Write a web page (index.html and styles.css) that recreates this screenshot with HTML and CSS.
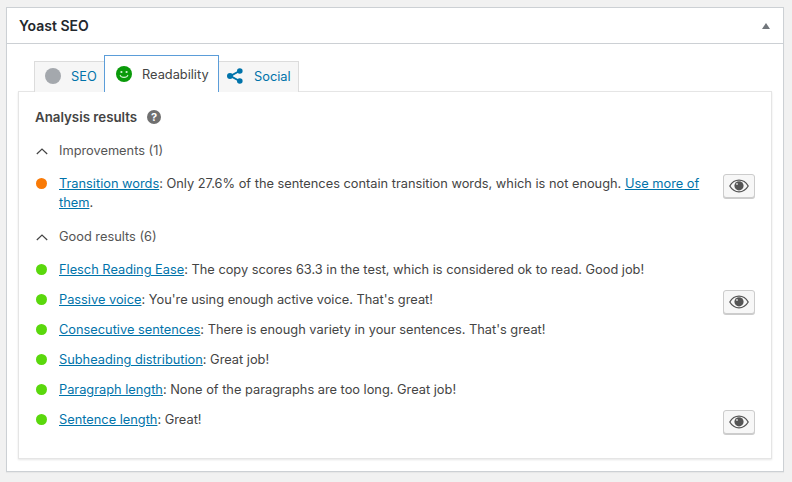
FILE: index.html
```html
<!DOCTYPE html>
<html lang="en">
<head>
<meta charset="utf-8">
<title>Yoast SEO</title>
<link rel="stylesheet" href="styles.css">
</head>
<body>
<section class="postbox">
  <header class="postbox-head">
    <h2 class="postbox-title">Yoast SEO</h2>
    <span class="collapse-arrow"></span>
  </header>
  <div class="postbox-body">
    <nav class="tabs">
      <a class="tab tab-seo"><span class="dot-gray"></span><span>SEO</span></a>
      <a class="tab tab-active">
        <svg class="smile" viewBox="0 0 16 16" width="16" height="16"><circle cx="8" cy="8" r="8" fill="#0a9a0a"/><circle cx="5.4" cy="6" r="1.1" fill="#d5f2d5"/><circle cx="10.6" cy="6" r="1.1" fill="#d5f2d5"/><path d="M4.2 9.4c.9 2.6 6.7 2.6 7.6 0" fill="none" stroke="#d5f2d5" stroke-width="1.1" stroke-linecap="round"/></svg>
        <span>Readability</span>
      </a>
      <a class="tab tab-social">
        <svg viewBox="0 0 16 16" width="16" height="16"><path d="M12.5 3 3.5 8l9 5" fill="none" stroke="#0073aa" stroke-width="2"/><circle cx="12.8" cy="3" r="2.8" fill="#0073aa"/><circle cx="3" cy="8" r="3" fill="#0073aa"/><circle cx="12.8" cy="13" r="2.8" fill="#0073aa"/></svg>
        <span>Social</span>
      </a>
    </nav>
    <div class="card">
      <h3 class="card-title">Analysis results <span class="help">?</span></h3>

      <h4 class="group-title"><svg class="chev" viewBox="0 0 12 7" width="12" height="7"><path d="M.8 6 6 1l5.2 5" fill="none" stroke="#444" stroke-width="1.2"/></svg>Improvements (1)</h4>
      <ul class="results results-first">
        <li class="result">
          <span class="bullet orange"></span>
          <p class="result-text"><a>Transition words</a>: Only 27.6% of the sentences contain transition words, which is not enough. <a>Use more of them</a>.</p>
          <button class="eye-btn"><svg viewBox="0 0 20 14" width="20" height="14"><path d="M.8 7C3 3.2 6.2 1.2 10 1.2S17 3.2 19.2 7C17 10.8 13.8 12.8 10 12.8S3 10.8.8 7Z" fill="none" stroke="#555" stroke-width="1.3"/><circle cx="10" cy="6.8" r="4.6" fill="#555"/><circle cx="8" cy="4.9" r="1" fill="#ccc"/></svg></button>
        </li>
      </ul>

      <h4 class="group-title group-good"><svg class="chev" viewBox="0 0 12 7" width="12" height="7"><path d="M.8 6 6 1l5.2 5" fill="none" stroke="#444" stroke-width="1.2"/></svg>Good results (6)</h4>
      <ul class="results results-good">
        <li class="result">
          <span class="bullet green"></span>
          <p class="result-text"><a>Flesch Reading Ease</a>: The copy scores 63.3 in the test, which is considered ok to read. Good job!</p>
        </li>
        <li class="result">
          <span class="bullet green"></span>
          <p class="result-text"><a>Passive voice</a>: You're using enough active voice. That's great!</p>
          <button class="eye-btn"><svg viewBox="0 0 20 14" width="20" height="14"><path d="M.8 7C3 3.2 6.2 1.2 10 1.2S17 3.2 19.2 7C17 10.8 13.8 12.8 10 12.8S3 10.8.8 7Z" fill="none" stroke="#555" stroke-width="1.3"/><circle cx="10" cy="6.8" r="4.6" fill="#555"/><circle cx="8" cy="4.9" r="1" fill="#ccc"/></svg></button>
        </li>
        <li class="result">
          <span class="bullet green"></span>
          <p class="result-text"><a>Consecutive sentences</a>: There is enough variety in your sentences. That's great!</p>
        </li>
        <li class="result">
          <span class="bullet green"></span>
          <p class="result-text"><a>Subheading distribution</a>: Great job!</p>
        </li>
        <li class="result">
          <span class="bullet green"></span>
          <p class="result-text"><a>Paragraph length</a>: None of the paragraphs are too long. Great job!</p>
        </li>
        <li class="result">
          <span class="bullet green"></span>
          <p class="result-text"><a>Sentence length</a>: Great!</p>
          <button class="eye-btn"><svg viewBox="0 0 20 14" width="20" height="14"><path d="M.8 7C3 3.2 6.2 1.2 10 1.2S17 3.2 19.2 7C17 10.8 13.8 12.8 10 12.8S3 10.8.8 7Z" fill="none" stroke="#555" stroke-width="1.3"/><circle cx="10" cy="6.8" r="4.6" fill="#555"/><circle cx="8" cy="4.9" r="1" fill="#ccc"/></svg></button>
        </li>
      </ul>
    </div>
  </div>
</section>
</body>
</html>
```
FILE: styles.css
```css
* { box-sizing: border-box; }
html, body { margin: 0; padding: 0; }
body {
  background: #f1f1f1;
  padding: 7px 8px 0 6px;
  font-family: Inter, "Liberation Sans", sans-serif;
  font-size: 12.8px;
  color: #444;
  height: 482px;
  overflow: hidden;
}
.postbox {
  background: #fff;
  border: 1px solid #ccd0d4;
  height: 465px;
  box-shadow: 0 1px 1px rgba(0,0,0,.04);
}
.postbox-head {
  height: 36px;
  border-bottom: 1px solid #ccd0d4;
  display: flex;
  align-items: center;
  justify-content: space-between;
  padding: 0 13px 0 12px;
}
.postbox-title { margin: 0; font-size: 14px; font-weight: 600; color: #23282d; line-height: 1.4; }
.collapse-arrow {
  width: 0; height: 0;
  border-left: 4px solid transparent;
  border-right: 4px solid transparent;
  border-bottom: 6px solid #72777c;
}
.postbox-body { padding: 11px 11px 0 11px; }
.tabs { display: flex; align-items: flex-end; padding-left: 16px; height: 37px; position: relative; z-index: 1; margin-bottom: -1px; }
.tab {
  display: flex; align-items: center;
  height: 31px;
  background: #f6f6f6;
  border: 1px solid #dcdcdc;
  border-bottom: 0;
  color: #0073aa;
  padding-bottom: 2px;
}
.tab-seo { width: 70px; padding-left: 10px; gap: 10px; border-right: 0; }
.dot-gray { width: 16px; height: 16px; border-radius: 50%; background: #a4a8ad; }
.tab-active {
  width: 115px; height: 37px;
  background: #fff;
  border: 1px solid #5b9dd9;
  border-bottom: 0;
  color: #444;
  padding: 0 0 0 11px;
  gap: 10px;
}
.tab-social { width: 80px; padding-left: 8px; gap: 11px; border-left: 0; }
.card {
  background: #fff;
  border: 1px solid #e5e5e5;
  box-shadow: 0 1px 2px rgba(0,0,0,.1);
  height: 368px;
  padding: 16px 16px 0 16px;
}
.card-title {
  margin: 0; font-size: 13.3px; font-weight: 600; line-height: 18px; color: #444;
  display: flex; align-items: center; gap: 10px;
}
.help {
  width: 14px; height: 14px; border-radius: 50%;
  background: #707070; color: #fff;
  font-size: 11px; font-weight: 700; line-height: 14px; text-align: center;
  display: inline-block;
}
.group-title {
  margin: 16px 0 0; font-size: 12.8px; font-weight: 400; line-height: 18px; color: #555;
  display: flex; align-items: center; gap: 11px;
}
.group-good { margin-top: 16px; }
.chev { margin-left: 1px; }
.results { list-style: none; margin: 14px 0 0; padding: 0; }
.result { display: flex; align-items: flex-start; min-height: 30px; }
.results-first .result { min-height: 36px; }
.bullet { flex: none; width: 11px; height: 11px; border-radius: 50%; margin: 4px 12px 0 1px; }
.orange { background: #f97a06; }
.green { background: #5ad80c; }
.result-text { margin: 0; flex: 1; line-height: 19px; padding-right: 23px; color: #444; }
.result-text a { color: #0073aa; text-decoration: underline; }
.eye-btn {
  flex: none; width: 32px; height: 24px; padding: 0;
  display: flex; align-items: center; justify-content: center;
  background: #f7f7f7; border: 1px solid #ccc; border-radius: 3px;
  box-shadow: 0 1px 0 #ccc;
}
```
